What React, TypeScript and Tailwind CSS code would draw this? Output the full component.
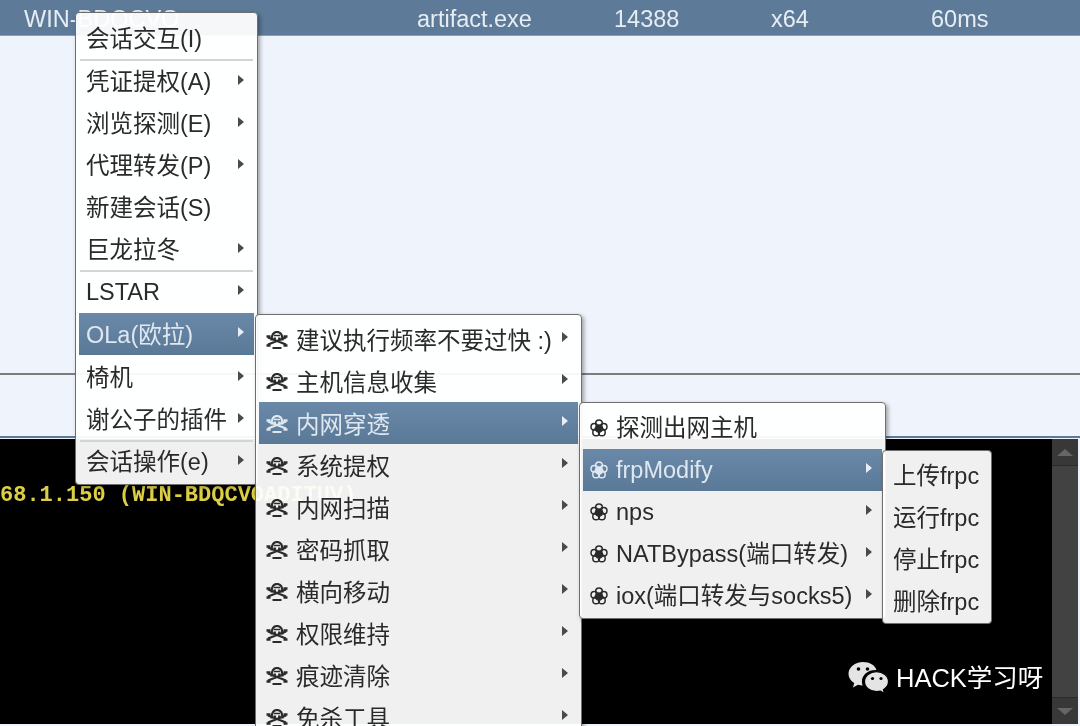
import type { ReactNode } from "react";

const FONT = "font-['Liberation_Sans','Noto_Sans_CJK_SC',sans-serif]";

function Arrow({ active }: { active?: boolean }) {
  return (
    <span
      className={`mb-1 h-0 w-0 border-y-[5px] border-l-[6px] border-y-transparent ${
        active ? "border-l-[#e8eef4]" : "border-l-[#4a4a4a]"
      }`}
    />
  );
}

interface RowProps {
  label: string;
  icon?: ReactNode;
  arrow?: boolean;
  active?: boolean;
  textClass?: string;
  arrowClass?: string;
}

function Row({ label, icon, arrow, active, textClass, arrowClass }: RowProps) {
  return (
    <div
      className={`flex h-[42px] shrink-0 items-center ${
        active
          ? "bg-linear-to-b from-[#6a89a9] to-[#5a7997] text-[#dfe7ef]"
          : "text-[#2a2a2a]"
      }`}
    >
      {icon}
      <span className={`flex-1 whitespace-nowrap ${textClass ?? ""}`}>{label}</span>
      {arrow && (
        <span className={`flex ${arrowClass ?? ""}`}>
          <Arrow active={active} />
        </span>
      )}
    </div>
  );
}

function Sep({ className }: { className: string }) {
  return <div className={`relative z-10 mx-px h-[2px] shrink-0 bg-[#d4d4d4] ${className}`} />;
}

function Menu({ className, children }: { className: string; children: ReactNode }) {
  return (
    <div
      className={`absolute flex flex-col rounded-[4px] border border-[#6e6e6e] bg-white/94 px-[3px] shadow-[2px_2px_4px_rgba(0,0,0,0.35)] ${className}`}
    >
      {children}
    </div>
  );
}

// small skull and crossbones in front of the OLa entries
const skull = (
  <span className="flex w-[30px] shrink-0 pl-[7px] pt-[3px]">
    <svg width="22" height="19" viewBox="0 0 22 19" fill="none" stroke="currentColor">
      <path d="M5.500 9.500C5.500 4 7.500 1 11 1s5.500 3 5.500 8.500" strokeWidth="2.200" />
      <path d="M8 4.500h6" strokeWidth="1.500" />
      <path d="M8.700 6.500v2.500M13.300 6.500v2.500" strokeWidth="2.400" />
      <path d="M2 6.500l18 7M20 6.500l-18 7" strokeWidth="2.200" />
      <path d="M0.500 5.500h4M17.500 5.500h4M0.500 14.500h4M17.500 14.500h4" strokeWidth="2.400" />
      <path d="M6.500 17h9" strokeWidth="2" />
    </svg>
  </span>
);

const flower = (
  <span className="flex w-[30px] shrink-0 pl-[7px]">
    <svg width="18" height="18" viewBox="0 0 18 18" fill="none" stroke="currentColor" strokeWidth="1.500">
      <circle cx="9" cy="4.200" r="3.300" />
      <circle cx="13.700" cy="7.700" r="3.300" />
      <circle cx="11.900" cy="13.400" r="3.300" />
      <circle cx="6.100" cy="13.400" r="3.300" />
      <circle cx="4.300" cy="7.700" r="3.300" />
      <circle cx="9" cy="9.500" r="3.600" fill="currentColor" />
    </svg>
  </span>
);

const level2 = [
  { label: "建议执行频率不要过快 :)" },
  { label: "主机信息收集" },
  { label: "内网穿透", active: true },
  { label: "系统提权" },
  { label: "内网扫描" },
  { label: "密码抓取" },
  { label: "横向移动" },
  { label: "权限维持" },
  { label: "痕迹清除" },
  { label: "免杀工具" },
];

const level3 = [
  { label: "探测出网主机", arrow: false },
  { label: "frpModify", arrow: true, active: true },
  { label: "nps", arrow: true },
  { label: "NATBypass(端口转发)", arrow: true },
  { label: "iox(端口转发与socks5)", arrow: true },
];

export default function App() {
  return (
    <div
      className={`relative flex h-[726px] w-[1080px] flex-col overflow-hidden bg-[#eff3fb] text-[23.5px] blur-[0.6px] ${FONT}`}
    >
      <div className="flex h-[36px] shrink-0 items-center overflow-hidden border-b border-[#86a0b8] bg-[#5d7b99] pl-6 pt-[5px] text-[#e6edf3]">
        <span className="w-[393px] whitespace-nowrap">WIN-BDQCVO</span>
        <span className="w-[197px]">artifact.exe</span>
        <span className="w-[157px]">14388</span>
        <span className="w-[160px]">x64</span>
        <span>60ms</span>
      </div>
      <div className="h-[337px] shrink-0" />
      <div className="h-[2px] shrink-0 bg-[#7d7d7d]" />
      <div className="h-[61px] shrink-0" />
      <div className="h-[2px] shrink-0 bg-[#5d7b99]" />

      <div className="mr-[2px] mt-px flex h-[285px] shrink-0 bg-black">
        <div className="flex-1 pt-[44px] font-['Liberation_Mono',monospace] text-[22px] font-bold leading-[26px] text-[#dccf45]">
          68.1.150 (WIN-BDQCVOADITUV)
        </div>
        <div className="flex w-[26px] flex-col bg-[#424242]">
          <div className="flex h-[26px] items-center justify-center bg-[#383838]">
            <span className="h-0 w-0 border-x-[8px] border-b-[7px] border-x-transparent border-b-[#666666]" />
          </div>
          <div className="flex-1 border-y border-[#2a2a2a]" />
          <div className="flex h-[26px] items-center justify-center bg-[#383838]">
            <span className="h-0 w-0 border-x-[8px] border-t-[7px] border-x-transparent border-t-[#666666]" />
          </div>
        </div>
      </div>

      <Menu className="left-[75px] top-[12px] w-[183px] pt-[5px] pb-px">
        <Row label="会话交互(I)" textClass="pl-[7px] pt-[2px]" />
        <Sep className="-mt-px" />
        <Row label="凭证提权(A)" arrow textClass="pl-[7px] pt-[2px]" arrowClass="pr-[10px]" />
        <Row label="浏览探测(E)" arrow textClass="pl-[7px] pt-[2px]" arrowClass="pr-[10px]" />
        <Row label="代理转发(P)" arrow textClass="pl-[7px] pt-[2px]" arrowClass="pr-[10px]" />
        <Row label="新建会话(S)" textClass="pl-[7px] pt-[2px]" />
        <Row label="巨龙拉冬" arrow textClass="pl-[7px] pt-[2px]" arrowClass="pr-[10px]" />
        <Sep className="-my-px" />
        <Row label="LSTAR" arrow textClass="pl-[7px] pt-[2px]" arrowClass="pr-[10px]" />
        <Row label="OLa(欧拉)" arrow active textClass="pl-[7px] pt-[4px]" arrowClass="pr-[10px]" />
        <div className="h-[2px] shrink-0" />
        <Row label="椅机" arrow textClass="pl-[7px] pt-[2px]" arrowClass="pr-[10px]" />
        <Row label="谢公子的插件" arrow textClass="pl-[7px] pt-[2px]" arrowClass="pr-[10px]" />
        <Sep className="-my-px" />
        <Row label="会话操作(e)" arrow textClass="pl-[7px] pt-[2px]" arrowClass="pr-[10px]" />
      </Menu>

      <Menu className="left-[255px] top-[314px] w-[327px] pt-[3px]">
        {level2.map((item) => (
          <Row
            key={item.label}
            label={item.label}
            icon={skull}
            arrow
            active={item.active}
            arrowClass="pr-[10px]"
            textClass="pl-[7px] pt-[5px]"
          />
        ))}
      </Menu>

      <Menu className="left-[579px] top-[402px] h-[217px] w-[307px] pt-[4px]">
        {level3.map((item) => (
          <Row
            key={item.label}
            label={item.label}
            icon={flower}
            arrow={item.arrow}
            active={item.active}
            arrowClass="pr-[10px]"
            textClass="pl-[3px] pt-[2px]"
          />
        ))}
      </Menu>

      <Menu className="left-[882px] top-[450px] h-[174px] w-[110px] pt-[4px]">
        <Row label="上传frpc" textClass="pl-[7px] pt-[2px]" />
        <Row label="运行frpc" textClass="pl-[7px] pt-[2px]" />
        <Row label="停止frpc" textClass="pl-[7px] pt-[2px]" />
        <Row label="删除frpc" textClass="pl-[7px] pt-[2px]" />
      </Menu>

      <div className="absolute left-[848px] top-[659px] flex items-center gap-[7px] text-[25.5px] text-white">
        <svg width="41" height="35" viewBox="0 0 41 35" fill="#e4e4e4">
          <path d="M15 1C7 1 .5 6.200.5 12.800c0 3.900 2.200 7.100 5.700 9.300L5 26.500l5-2.700c1.500.4 3 .6 4.600.6-.5-1.300-.7-2.600-.7-3.900 0-6.600 6-11.500 13.500-11.500h1.100C27.100 4.200 21.600 1 15 1z" />
          <path d="M40.500 20.600c0-5.700-5.500-10-12-10s-12 4.300-12 10 5.500 10 12 10c1.400 0 2.700-.2 3.900-.5l4.100 2.500-1.100-3.900c3.100-2 5.100-4.900 5.100-8.100z" stroke="#000" strokeWidth="1.200" />
          <circle cx="10.500" cy="8" r="1.800" fill="#000" />
          <circle cx="19.500" cy="8" r="1.800" fill="#000" />
          <circle cx="24.500" cy="17.500" r="1.600" fill="#000" />
          <circle cx="33" cy="17.500" r="1.600" fill="#000" />
        </svg>
        <span>HACK学习呀</span>
      </div>
    </div>
  );
}
